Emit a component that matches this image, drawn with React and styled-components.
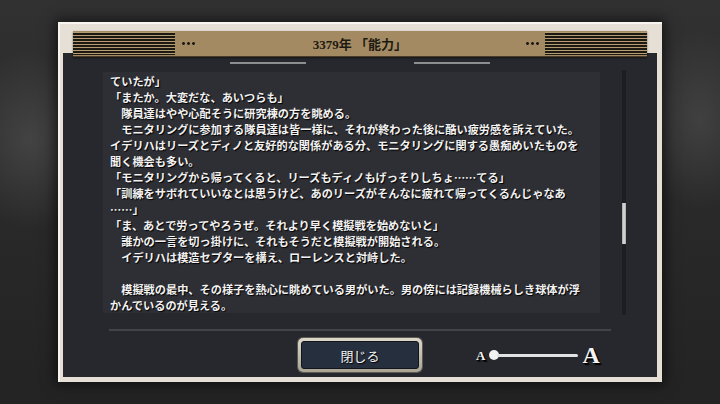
import React from 'react';
import styled, { createGlobalStyle } from 'styled-components';

const GlobalStyle = createGlobalStyle`
  html, body {
    margin: 0;
    padding: 0;
    background: #2a2a2a;
  }
  body {
    font-family: "Liberation Serif", "Noto Sans CJK JP", serif;
  }
`;

const Page = styled.div`
  width: 720px;
  height: 404px;
  box-sizing: border-box;
  padding: 22px 58px;
  overflow: hidden;
  background:
    radial-gradient(ellipse 70px 90px at 30px 140px, rgba(110, 110, 110, 0.35), transparent),
    radial-gradient(ellipse 60px 90px at 700px 120px, rgba(110, 110, 110, 0.3), transparent),
    linear-gradient(#313131, #282828 60%, #232323);
`;

const Frame = styled.div`
  width: 604px;
  height: 360px;
  box-sizing: border-box;
  padding: 9px 5px 5px;
  display: flex;
  flex-direction: column;
  background: #e5dfd6;
  box-shadow: inset 2px 2px 0 #f8f5f0, 0 0 12px 3px rgba(0, 0, 0, 0.55);
`;

const Band = styled.div`
  position: relative;
  z-index: 1;
  height: 26px;
  margin: 0 10px -4px;
  box-sizing: border-box;
  display: grid;
  grid-template-columns: 102px auto 1fr auto 102px;
  column-gap: 6px;
  align-items: center;
  background: #a38a63;
  border-bottom: 1px solid #4a3d28;
  box-shadow: 0 1px 2px rgba(0, 0, 0, 0.5);
`;

const Stripes = styled.div`
  align-self: start;
  height: 23px;
  margin-top: 1px;
  background: repeating-linear-gradient(to bottom, #b59c72 0 1px, #1c1812 1px 3px);
`;

const Dots = styled.div`
  width: 14px;
  height: 3px;
  background: radial-gradient(circle, #1c1812 1.2px, transparent 1.6px) 0 0 / 5px 3px repeat-x;
`;

const Title = styled.div`
  text-align: center;
  font-size: 13px;
  font-weight: 700;
  color: #1e1a12;
`;

const Panel = styled.div`
  flex: 1;
  display: flex;
  flex-direction: column;
  background: #27282d;
`;

const Marks = styled.div`
  display: flex;
  justify-content: center;
  gap: 108px;
  margin-top: 9px;
`;

const Mark = styled.div`
  width: 76px;
  height: 2px;
  background: #8d8e90;
`;

const Body = styled.div`
  display: flex;
  height: 241px;
  margin-top: 8px;
  padding-left: 40px;
`;

const TextBox = styled.div`
  width: 497px;
  height: 241px;
  box-sizing: border-box;
  padding: 1px 0 0 7px;
  overflow: hidden;
  background: #2e2f35;
  color: #f2f2f2;
  font-family: "Noto Sans CJK JP", sans-serif;
  font-size: 11.2px;
  font-weight: 700;
  line-height: 16px;
  text-shadow: 1px 1px 1px #000;
`;

const Line = styled.div`
  white-space: pre;
  min-height: 16px;
`;

const Track = styled.div`
  width: 4px;
  height: 245px;
  margin: -2px 0 0 22px;
  display: flex;
  flex-direction: column;
  background: #1d1e21;
`;

const Thumb = styled.div`
  height: 41px;
  margin-top: 133px;
  background: linear-gradient(to right, #a6a6a6, #dedede, #a6a6a6);
`;

const Divider = styled.div`
  width: 502px;
  height: 2px;
  margin: 16px 0 0 46px;
  background: #41454b;
`;

const Footer = styled.div`
  display: grid;
  grid-template-columns: 1fr 124px 1fr;
  align-items: center;
  margin-top: 7px;
`;

const CloseButton = styled.div`
  grid-column: 2;
  height: 34px;
  box-sizing: border-box;
  padding: 3px;
  border-radius: 5px;
  background: linear-gradient(#dcd7c9, #a9a493);
  box-shadow: 0 0 0 1px #5d5a52;
`;

const ButtonFace = styled.div`
  height: 100%;
  box-sizing: border-box;
  display: flex;
  align-items: center;
  justify-content: center;
  border-radius: 3px;
  border: 1px solid #11151c;
  background: #262f3e;
  color: #f3f3f3;
  font-size: 13px;
  text-shadow: 1px 1px 1px #000;
`;

const SizeSlider = styled.div`
  display: flex;
  align-items: center;
  padding-left: 54px;
  color: #f4f4f4;
  font-weight: 700;
  text-shadow: 1px 1px 0 #000, 2px 2px 1px #000;
`;

const Glyph = styled.span`
  font-family: "Liberation Serif", serif;
  font-size: ${p => p.$size}px;
  line-height: 1;
`;

const Rail = styled.div`
  display: flex;
  align-items: center;
  width: 89px;
  margin: 0 4px 0 4px;
`;

const Knob = styled.div`
  width: 10px;
  height: 10px;
  border-radius: 50%;
  background: #f2f2f2;
  flex-shrink: 0;
`;

const RailLine = styled.div`
  flex: 1;
  height: 3px;
  margin-left: -2px;
  border-radius: 2px;
  background: #e2e2e2;
`;

const lines = [
  'ていたが」',
  '「またか。大変だな、あいつらも」',
  '　隊員達はやや心配そうに研究棟の方を眺める。',
  '　モニタリングに参加する隊員達は皆一様に、それが終わった後に酷い疲労感を訴えていた。',
  'イデリハはリーズとディノと友好的な関係がある分、モニタリングに関する愚痴めいたものを',
  '聞く機会も多い。',
  '「モニタリングから帰ってくると、リーズもディノもげっそりしちょ……てる」',
  '「訓練をサボれていいなとは思うけど、あのリーズがそんなに疲れて帰ってくるんじゃなあ',
  '……」',
  '「ま、あとで労ってやろうぜ。それより早く模擬戦を始めないと」',
  '　誰かの一言を切っ掛けに、それもそうだと模擬戦が開始される。',
  '　イデリハは模造セプターを構え、ローレンスと対峙した。',
  '',
  '　模擬戦の最中、その様子を熱心に眺めている男がいた。男の傍には記録機械らしき球体が浮',
  'かんでいるのが見える。',
];

export default function App() {
  return (
    <>
      <GlobalStyle />
      <Page>
        <Frame>
          <Band>
            <Stripes />
            <Dots />
            <Title>3379年 「能力」</Title>
            <Dots />
            <Stripes />
          </Band>
          <Panel>
            <Marks>
              <Mark />
              <Mark />
            </Marks>
            <Body>
              <TextBox>
                {lines.map((line, i) => (
                  <Line key={i}>{line}</Line>
                ))}
              </TextBox>
              <Track>
                <Thumb />
              </Track>
            </Body>
            <Divider />
            <Footer>
              <CloseButton>
                <ButtonFace>閉じる</ButtonFace>
              </CloseButton>
              <SizeSlider>
                <Glyph $size={13}>A</Glyph>
                <Rail>
                  <Knob />
                  <RailLine />
                </Rail>
                <Glyph $size={24}>A</Glyph>
              </SizeSlider>
            </Footer>
          </Panel>
        </Frame>
      </Page>
    </>
  );
}
